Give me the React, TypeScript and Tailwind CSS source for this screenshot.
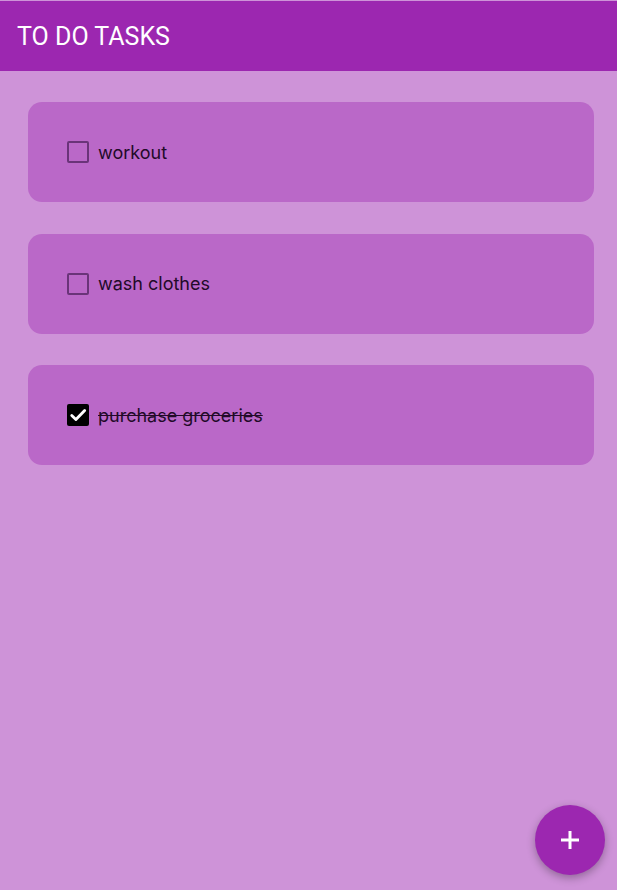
import React from "react";

const tasks = [
  { text: "workout", done: false },
  { text: "wash clothes", done: false },
  { text: "purchase groceries", done: true },
];

export default function App() {
  return (
    <div className="relative min-h-[890px] w-full bg-[#ce93d8] pt-px" style={{ fontFamily: "Inter, Roboto, sans-serif" }}>
      <header className="flex h-[70px] items-center bg-[#9c27b0] px-[17px]">
        <h1 className="text-[25px] font-normal leading-none text-white" style={{ fontFamily: "Roboto, sans-serif" }}>TO DO TASKS</h1>
      </header>
      <main className="flex flex-col gap-[31.5px] pl-[28px] pr-[23px] pt-[31px]">
        {tasks.map((t) => (
          <div key={t.text} className="flex h-[100px] items-center rounded-[14px] bg-[#ba68c8] pl-[39px]">
            {t.done ? (
              <span className="flex h-[22px] w-[22px] items-center justify-center rounded-[2px] bg-black">
                <svg width="20" height="20" viewBox="0 0 24 24" fill="none" stroke="white" strokeWidth="3.4" strokeLinecap="round" strokeLinejoin="round">
                  <path d="M4.5 12.5l5 5L20 6.5" />
                </svg>
              </span>
            ) : (
              <span className="box-border h-[22px] w-[22px] rounded-[2px] border-[2.5px] border-[#6a3479]" />
            )}
            <span className={"ml-[9px] text-[18px] text-[#220a28] " + (t.done ? "line-through" : "")}>{t.text}</span>
          </div>
        ))}
      </main>
      <button className="absolute bottom-[15px] right-[12px] flex h-[70px] w-[70px] items-center justify-center rounded-full bg-[#9c27b0] shadow-[0_3px_8px_rgba(0,0,0,0.3)]">
        <svg width="22" height="22" viewBox="0 0 22 22" stroke="white" strokeWidth="3">
          <path d="M11 2v18M2 11h18" />
        </svg>
      </button>
    </div>
  );
}
